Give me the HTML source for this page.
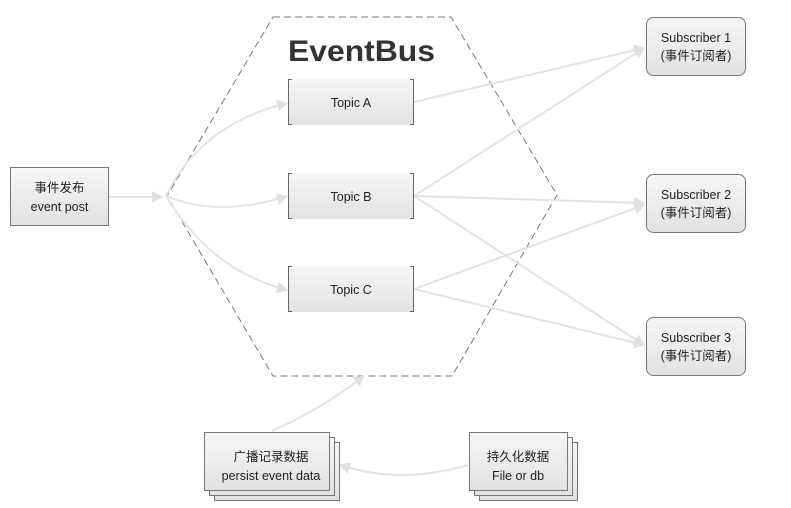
<!DOCTYPE html>
<html><head><meta charset="utf-8"><style>
html,body{margin:0;padding:0;background:#fff;width:791px;height:508px;overflow:hidden}
svg text{font-family:"Liberation Sans","Noto Sans CJK SC",sans-serif;fill:#222}
</style></head><body>
<svg width="791" height="508" viewBox="0 0 791 508" xmlns="http://www.w3.org/2000/svg">
<defs>
<linearGradient id="g" x1="0" y1="0" x2="0" y2="1"><stop offset="0" stop-color="#f6f6f6"/><stop offset="1" stop-color="#e2e2e2"/></linearGradient>
<marker id="a" markerWidth="12" markerHeight="12" refX="10" refY="6" orient="auto" markerUnits="userSpaceOnUse"><path d="M0,0 L11,6 L0,12 Z" fill="#e0e0e0"/></marker>
</defs>
<path d="M273,17 L451,17 L557,195 L452,376 L273,376 L167,196 Z" fill="none" stroke="#777" stroke-dasharray="7,4" stroke-width="1"/>
<text x="288" y="61" font-size="30" font-weight="bold" textLength="147" lengthAdjust="spacingAndGlyphs" style="fill:#333">EventBus</text>
<g stroke="#e3e3e3" stroke-width="2" fill="none">
<line x1="109" y1="197" x2="162" y2="197" marker-end="url(#a)"/>
<path d="M166,196 Q200,125 287,103" marker-end="url(#a)"/>
<path d="M166,196 Q220,218 287,196" marker-end="url(#a)"/>
<path d="M166,196 Q210,270 287,290" marker-end="url(#a)"/>
<line x1="414" y1="102" x2="644" y2="48" marker-end="url(#a)"/>
<line x1="414" y1="196" x2="644" y2="48" marker-end="url(#a)"/>
<line x1="414" y1="196" x2="644" y2="203" marker-end="url(#a)"/>
<line x1="414" y1="196" x2="644" y2="345" marker-end="url(#a)"/>
<line x1="414" y1="289" x2="644" y2="205" marker-end="url(#a)"/>
<line x1="414" y1="289" x2="644" y2="345" marker-end="url(#a)"/>
<path d="M272,431 Q320,410 364,376" marker-end="url(#a)"/>
<path d="M468,465 Q400,485 340,465" marker-end="url(#a)"/>
</g>
<rect x="10.5" y="167.5" width="98" height="58" fill="url(#g)" stroke="#777"/>
<text x="59.5" y="192" font-size="12.5" text-anchor="middle">事件发布</text>
<text x="59.5" y="211" font-size="12.5" text-anchor="middle">event post</text>
<g>
<rect x="288" y="79" width="126" height="46" fill="url(#g)"/>
<path d="M292,79.5 H288.5 V124.5 H292 M410,79.5 H413.5 V124.5 H410" fill="none" stroke="#666"/>
<text x="351" y="107" font-size="12.5" text-anchor="middle">Topic A</text>
<rect x="288" y="173" width="126" height="46" fill="url(#g)"/>
<path d="M292,173.5 H288.5 V218.5 H292 M410,173.5 H413.5 V218.5 H410" fill="none" stroke="#666"/>
<text x="351" y="201" font-size="12.5" text-anchor="middle">Topic B</text>
<rect x="288" y="266" width="126" height="46" fill="url(#g)"/>
<path d="M292,266.5 H288.5 V311.5 H292 M410,266.5 H413.5 V311.5 H410" fill="none" stroke="#666"/>
<text x="351" y="294" font-size="12.5" text-anchor="middle">Topic C</text>
</g>
<g font-size="12.5">
<rect x="646.5" y="17.5" width="99" height="58" rx="7" fill="url(#g)" stroke="#777"/>
<text x="696" y="42" text-anchor="middle">Subscriber 1</text>
<text x="696" y="60" text-anchor="middle">(事件订阅者)</text>
<rect x="646.5" y="174.5" width="99" height="58" rx="7" fill="url(#g)" stroke="#777"/>
<text x="696" y="199" text-anchor="middle">Subscriber 2</text>
<text x="696" y="217" text-anchor="middle">(事件订阅者)</text>
<rect x="646.5" y="317.5" width="99" height="58" rx="7" fill="url(#g)" stroke="#777"/>
<text x="696" y="342" text-anchor="middle">Subscriber 3</text>
<text x="696" y="360" text-anchor="middle">(事件订阅者)</text>
</g>
<g stroke="#777" fill="url(#g)">
<rect x="214.5" y="442.5" width="125" height="58"/>
<rect x="209.5" y="437.5" width="125" height="58"/>
<rect x="204.5" y="432.5" width="125" height="58"/>
<rect x="479.5" y="442.5" width="98" height="58"/>
<rect x="474.5" y="437.5" width="98" height="58"/>
<rect x="469.5" y="432.5" width="98" height="58"/>
</g>
<text x="271" y="461" font-size="12.5" text-anchor="middle">广播记录数据</text>
<text x="271" y="480" font-size="12.5" text-anchor="middle">persist event data</text>
<text x="518" y="461" font-size="12.5" text-anchor="middle">持久化数据</text>
<text x="518" y="480" font-size="12.5" text-anchor="middle">File or db</text>
</svg>
</body></html>
